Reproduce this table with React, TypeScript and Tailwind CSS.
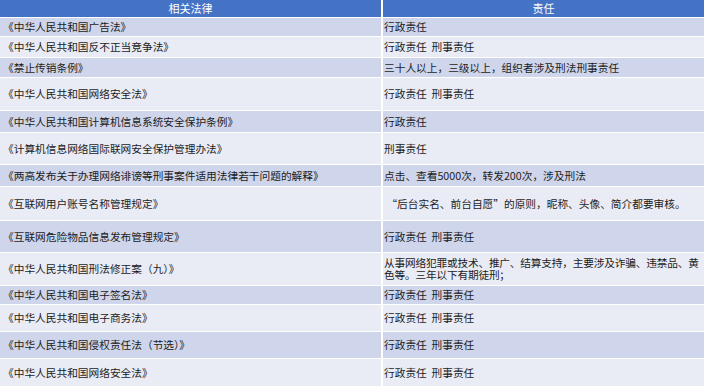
import React from 'react';

type Row = { law: string; duty: React.ReactNode; h: string; tone: 'dark' | 'light' };

const rows: Row[] = [
  { law: '《中华人民共和国广告法》', duty: '行政责任', h: 'h-[18px]', tone: 'dark' },
  { law: '《中华人民共和国反不正当竞争法》', duty: '行政责任\u00a0\u00a0刑事责任', h: 'h-[20px]', tone: 'light' },
  { law: '《禁止传销条例》', duty: '三十人以上，三级以上，组织者涉及刑法刑事责任', h: 'h-[19px]', tone: 'dark' },
  { law: '《中华人民共和国网络安全法》', duty: '行政责任\u00a0\u00a0刑事责任', h: 'h-[32px]', tone: 'light' },
  { law: '《中华人民共和国计算机信息系统安全保护条例》', duty: '行政责任', h: 'h-[21px]', tone: 'dark' },
  { law: '《计算机信息网络国际联网安全保护管理办法》', duty: '刑事责任', h: 'h-[31px]', tone: 'light' },
  {
    law: '《两高发布关于办理网络诽谤等刑事案件适用法律若干问题的解释》',
    duty: '点击、查看5000次，转发200次，涉及刑法',
    h: 'h-[21px]',
    tone: 'dark',
  },
  {
    law: '《互联网用户账号名称管理规定》',
    duty: '\u00a0“后台实名、前台自愿”的原则，昵称、头像、简介都要审核。',
    h: 'h-[33px]',
    tone: 'light',
  },
  { law: '《互联网危险物品信息发布管理规定》', duty: '行政责任\u00a0\u00a0刑事责任', h: 'h-[31px]', tone: 'dark' },
  {
    law: '《中华人民共和国刑法修正案（九）》',
    duty: (
      <span className="block tracking-[-0.2px] leading-[12px]">
        从事网络犯罪或技术、推广、结算支持，主要涉及诈骗、违禁品、黄
        <br />
        色等。三年以下有期徒刑；
      </span>
    ),
    h: 'h-[32px]',
    tone: 'light',
  },
  { law: '《中华人民共和国电子签名法》', duty: '行政责任\u00a0\u00a0刑事责任', h: 'h-[18px]', tone: 'dark' },
  { law: '《中华人民共和国电子商务法》', duty: '行政责任\u00a0\u00a0刑事责任', h: 'h-[26px]', tone: 'light' },
  { law: '《中华人民共和国侵权责任法（节选）》', duty: '行政责任\u00a0\u00a0刑事责任', h: 'h-[26px]', tone: 'dark' },
  { law: '《中华人民共和国网络安全法》', duty: '行政责任\u00a0\u00a0刑事责任', h: 'h-[27px]', tone: 'light' },
];

export default function App() {
  return (
    <div
      className="w-[705px] h-[386px] overflow-hidden bg-white pr-px text-[#1c1c1c]"
      style={{ fontFamily: '"Noto Sans CJK SC", "Noto Sans", sans-serif' }}
    >
      <div className="grid grid-cols-[381px_1fr] gap-x-[2px] h-[16px] bg-white mb-[2px]">
        <div className="bg-[#4472c4] text-white text-[11px] flex items-center justify-center">相关法律</div>
        <div className="bg-[#4472c4] text-white text-[11px] flex items-center justify-center">责任</div>
      </div>
      <div className="flex flex-col gap-y-px">
        {rows.map((r, i) => {
          const bg = r.tone === 'dark' ? 'bg-[#cfd5ea]' : 'bg-[#e9ebf5]';
          return (
            <div key={i} className={`grid grid-cols-[381px_1fr] gap-x-[2px] ${r.h}`}>
              <div className={`${bg} flex items-center px-[3px] text-[10.7px] leading-[12px] whitespace-nowrap`}>
                {r.law}
              </div>
              <div className={`${bg} flex items-center pl-px text-[10.7px] leading-[12px] whitespace-nowrap overflow-hidden`}>
                <span>{r.duty}</span>
              </div>
            </div>
          );
        })}
      </div>
    </div>
  );
}
